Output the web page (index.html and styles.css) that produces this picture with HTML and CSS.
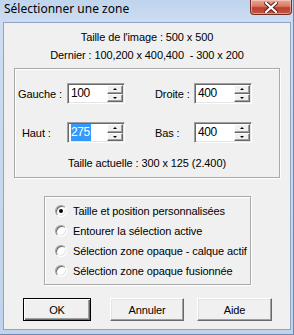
FILE: index.html
```html
<!DOCTYPE html>
<html lang="fr">
<head>
    <meta charset="UTF-8">
    <title>Sélectionner une zone</title>
    <link rel="stylesheet" href="styles.css">
</head>
<body>

    <div class="window">
        <div class="titlebar">
            <span class="title">Sélectionner une zone</span>
            <div class="close">
                <svg width="14" height="11" viewBox="0 0 14 11">
                    <path d="M2 1 L12 10 M12 1 L2 10" stroke="#5a1e14" stroke-width="4" stroke-linecap="square"/>
                    <path d="M2 1 L12 10 M12 1 L2 10" stroke="#fff" stroke-width="2.2" stroke-linecap="square"/>
                </svg>
            </div>
        </div>

        <div class="client">
            <div class="info">Taille de l'image : 500 x 500</div>
            <div class="info">Dernier : 100,200 x 400,400&nbsp; - 300 x 200</div>

            <div class="group group-size">
                <div class="row">
                    <label class="lbl lbl-left">Gauche :</label>
                    <div class="spin"><span class="val">100</span><div class="arrows"><span class="up"></span><span class="down"></span></div></div>
                    <label class="lbl lbl-right">Droite :</label>
                    <div class="spin"><span class="val">400</span><div class="arrows"><span class="up"></span><span class="down"></span></div></div>
                </div>
                <div class="row row-second">
                    <label class="lbl lbl-left lbl-haut">Haut :</label>
                    <div class="spin"><span class="val"><span class="selected">275</span></span><div class="arrows"><span class="up"></span><span class="down"></span></div></div>
                    <label class="lbl lbl-right">Bas :</label>
                    <div class="spin"><span class="val">400</span><div class="arrows"><span class="up"></span><span class="down"></span></div></div>
                </div>
                <div class="current">Taille actuelle : 300 x 125 (2.400)</div>
            </div>

            <div class="group group-mode">
                <div class="radio"><span class="dot checked"></span>Taille et position personnalisées</div>
                <div class="radio"><span class="dot"></span>Entourer la sélection active</div>
                <div class="radio"><span class="dot"></span>Sélection zone opaque - calque actif</div>
                <div class="radio"><span class="dot"></span>Sélection zone opaque fusionnée</div>
            </div>

            <div class="buttons">
                <button class="btn btn-ok">OK</button>
                <button class="btn btn-cancel">Annuler</button>
                <button class="btn btn-help">Aide</button>
            </div>
        </div>
    </div>

</body>
</html>
```

FILE: styles.css
```css
body {
    margin: 0;
    font-family: "Liberation Sans", Arial, sans-serif;
    font-size: 11px;
    letter-spacing: -0.1px;
    color: #000;
}
.window {
    width: 294px;
    height: 335px;
    box-sizing: border-box;
    padding: 0 2px 4px 3px;
    display: flex;
    flex-direction: column;
    background: linear-gradient(to bottom, #c0d4ee 0px, #cddcf1 22px, #bfd3ec 100%);
    border-right: 1px solid #6d87ad;
    border-bottom: 1px solid #6d87ad;
}
.titlebar {
    height: 22px;
    margin: 0 -2px 0 -3px;
    padding: 0 1px 0 4px;
    display: flex;
    align-items: flex-start;
}
.title {
    font-family: "Noto Sans", sans-serif;
    font-size: 12px;
    letter-spacing: 0;
    line-height: 17px;
    color: #000;
}
.close {
    margin-left: auto;
    width: 42px;
    height: 15px;
    box-sizing: border-box;
    border: 1px solid #6f2e25;
    border-top: none;
    border-radius: 0 0 4px 4px;
    background: linear-gradient(to bottom, #e9a894 0%, #d77a66 45%, #c0402c 55%, #c4553d 100%);
    box-shadow: inset 0 0 0 1px rgba(255, 220, 210, 0.5);
    display: flex;
    justify-content: center;
    align-items: center;
}
.client {
    flex: 1;
    background-color: #f0f0f0;
    border: 1px solid #8ea4c2;
    display: flex;
    flex-direction: column;
}
.info {
    text-align: center;
    line-height: 18px;
}
.info:first-child {
    margin-top: 5px;
}
.group {
    box-sizing: border-box;
    border: 1px solid #a9a9a9;
    box-shadow: 1px 1px 0 #fff, inset 1px 1px 0 #fff;
}
.group-size {
    margin: 4px 0 0 10px;
    width: 266px;
    height: 110px;
    padding-top: 14px;
}
.row {
    display: flex;
    align-items: center;
    height: 21px;
}
.row-second {
    margin-top: 18px;
}
.lbl {
    display: block;
}
.lbl-left {
    width: 49px;
    padding-left: 3px;
}
.lbl-haut {
    width: 45px;
    padding-left: 7px;
}
.lbl-right {
    width: 39px;
    margin-left: 30px;
}
.spin {
    width: 58px;
    height: 21px;
    box-sizing: border-box;
    display: flex;
    background-color: #fff;
    border: 1px solid;
    border-color: #a0a0a0 #fff #fff #a0a0a0;
    box-shadow: inset 1px 1px 0 #696969, inset -1px -1px 0 #e3e3e3;
    padding: 1px;
}
.val {
    flex: 1;
    font-size: 12px;
    letter-spacing: -0.4px;
    line-height: 17px;
    padding-left: 2px;
}
.selected {
    background-color: #3399ff;
    color: #fff;
    display: inline-block;
    line-height: 17px;
    height: 17px;
    padding-right: 1px;
}
.arrows {
    width: 16px;
    display: flex;
    flex-direction: column;
}
.arrows span {
    flex: 1;
    box-sizing: border-box;
    background-color: #f0f0f0;
    border: 1px solid;
    border-color: #fff #696969 #696969 #fff;
    box-shadow: inset -1px -1px 0 #a0a0a0;
    display: flex;
    justify-content: center;
    align-items: center;
}
.arrows .up::after {
    content: "";
    border-left: 2px solid transparent;
    border-right: 2px solid transparent;
    border-bottom: 2px solid #000;
}
.arrows .down::after {
    content: "";
    border-left: 2px solid transparent;
    border-right: 2px solid transparent;
    border-top: 2px solid #000;
}
.current {
    text-align: center;
    line-height: 14px;
    margin-top: 13px;
}
.group-mode {
    margin: 18px 0 0 40px;
    width: 207px;
    height: 89px;
    padding-top: 4px;
}
.radio {
    display: flex;
    align-items: center;
    height: 20px;
    padding-left: 10px;
    white-space: nowrap;
}
.dot {
    flex: none;
    width: 12px;
    height: 12px;
    box-sizing: border-box;
    border-radius: 50%;
    margin-right: 6px;
    background-color: #fff;
    border: 1px solid;
    border-color: #a0a0a0 #fff #fff #a0a0a0;
    box-shadow: inset 1px 1px 0 #696969, inset -1px -1px 0 #e3e3e3;
    display: flex;
    justify-content: center;
    align-items: center;
}
.dot.checked::after {
    content: "";
    width: 4px;
    height: 4px;
    border-radius: 50%;
    background-color: #000;
}
.buttons {
    display: flex;
    margin: 13px 0 0 19px;
}
.btn {
    height: 23px;
    box-sizing: border-box;
    font-family: "Liberation Sans", Arial, sans-serif;
    font-size: 11px;
    letter-spacing: -0.1px;
    color: #000;
    background-color: #f0f0f0;
    border: 1px solid;
    border-color: #fff #696969 #696969 #fff;
    box-shadow: inset -1px -1px 0 #a0a0a0, inset 1px 1px 0 #e3e3e3;
    padding: 0;
}
.btn-ok {
    width: 68px;
    border-color: #000;
    box-shadow: inset 1px 1px 0 #fff, inset -1px -1px 0 #696969, inset -2px -2px 0 #a0a0a0;
}
.btn-cancel {
    width: 74px;
    margin-left: 19px;
}
.btn-help {
    width: 75px;
    margin-left: 13px;
}
```
